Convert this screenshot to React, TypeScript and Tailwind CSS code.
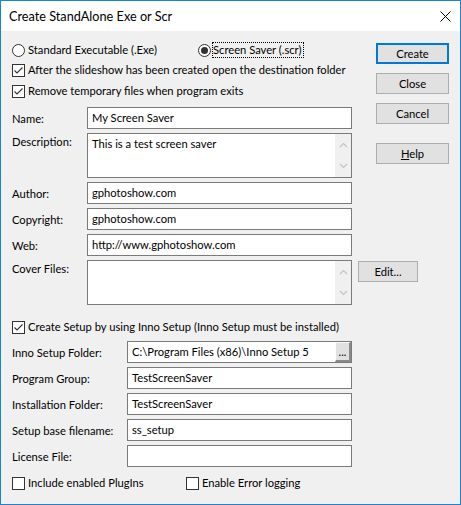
function Radio({ checked }: { checked?: boolean }) {
  return (
    <span className="w-[13px] h-[13px] rounded-full border border-[#333] bg-white flex items-center justify-center shrink-0">
      {checked && <span className="w-[7px] h-[7px] rounded-full bg-[#333]" />}
    </span>
  )
}

function Check({ checked, label, className }: { checked?: boolean; label: string; className?: string }) {
  return (
    <div className={"flex items-center h-[16px] " + (className ?? "")}>
      <span className="w-[13px] h-[13px] border border-[#333] bg-white shrink-0 relative">
        {checked && (
          <svg width="11" height="11" viewBox="0 0 11 11" className="absolute left-0 top-0">
            <path d="M1.5 5.5 L4 8 L9.5 2.5" fill="none" stroke="#333" strokeWidth="1.1" />
          </svg>
        )}
      </span>
      <span className="ml-[3px] whitespace-nowrap">{label}</span>
    </div>
  )
}

function Button({ children, primary, className }: { children: React.ReactNode; primary?: boolean; className?: string }) {
  return (
    <div
      className={
        "h-[21px] bg-[#e1e1e1] flex items-center justify-center " +
        (primary ? "border-2 border-[#0078d7] " : "border border-[#adadad] ") +
        (className ?? "")
      }
    >
      {children}
    </div>
  )
}

function Field({ value, className }: { value?: string; className?: string }) {
  return (
    <div className={"h-[22px] bg-white border border-[#7a7a7a] pl-[4px] flex items-center whitespace-nowrap " + (className ?? "")}>
      {value}
    </div>
  )
}

function Memo({ value }: { value?: string }) {
  return (
    <div className="w-[265px] h-[45px] bg-white border border-[#7a7a7a] flex">
      <div className="flex-1 pl-[4px] pt-[2px]">{value}</div>
      <div className="w-[16px] bg-[#f0f0f0] flex flex-col items-center justify-between py-[8px]">
        <svg width="9" height="6" viewBox="0 0 9 6">
          <path d="M1 5 L4.5 1.5 L8 5" fill="none" stroke="#c2c2c2" strokeWidth="1.2" />
        </svg>
        <svg width="9" height="6" viewBox="0 0 9 6">
          <path d="M1 1 L4.5 4.5 L8 1" fill="none" stroke="#c2c2c2" strokeWidth="1.2" />
        </svg>
      </div>
    </div>
  )
}

function Row({ label, children, labelW, top }: { label: string; children: React.ReactNode; labelW: string; top?: boolean }) {
  return (
    <div className="flex">
      <div className={"whitespace-nowrap shrink-0 " + labelW + (top ? " pt-[1px]" : " pt-[4px]")}>{label}</div>
      {children}
    </div>
  )
}

export default function App() {
  return (
    <div className="w-[461px] h-[505px] border border-[#1883d7] bg-[#f0f0f0] flex flex-col text-[11.2px] leading-[16px] text-black font-['Lato',sans-serif]">
      <div className="h-[30px] bg-white flex items-center justify-between pl-[8px] pr-[9px] shrink-0">
        <span className="text-[12.7px]">Create StandAlone Exe or Scr</span>
        <svg width="11" height="11" viewBox="0 0 11 11">
          <path d="M0.5 0.5 L10.5 10.5 M10.5 0.5 L0.5 10.5" stroke="#000" strokeWidth="1" />
        </svg>
      </div>

      <div className="pl-[11px] pt-[11px] flex flex-col">
        <div className="flex">
          <div className="w-[340px] flex flex-col">
            <div className="flex items-center h-[16px]">
              <div className="w-[186px] flex items-center">
                <Radio />
                <span className="ml-[3px] whitespace-nowrap">Standard Executable (.Exe)</span>
              </div>
              <Radio checked />
              <span className="ml-[1px] pr-[2px] border border-dotted border-black h-[16px] flex items-center whitespace-nowrap shrink-0">
                Screen Saver (.scr)
              </span>
            </div>
            <Check checked label="After the slideshow has been created open the destination folder" className="mt-[4px]" />
            <Check checked label="Remove temporary files when program exits" className="mt-[5px]" />
            <div className="mt-[8px] flex flex-col gap-[4px]">
              <Row label="Name:" labelW="w-[75px]">
                <Field value="My Screen Saver" className="w-[265px]" />
              </Row>
              <Row label="Description:" labelW="w-[75px]" top>
                <Memo value="This is a test screen saver" />
              </Row>
            </div>
          </div>
          <div className="ml-[24px] pt-[1px] w-[73px] flex flex-col">
            <Button primary>Create</Button>
            <Button className="mt-[9px]">Close</Button>
            <Button className="mt-[9px]">Cancel</Button>
            <Button className="mt-[19px]">
              <span>
                <span className="underline">H</span>elp
              </span>
            </Button>
          </div>
        </div>

        <div className="mt-[4px] flex flex-col gap-[4px]">
          <Row label="Author:" labelW="w-[75px]">
            <Field value="gphotoshow.com" className="w-[265px]" />
          </Row>
          <Row label="Copyright:" labelW="w-[75px]">
            <Field value="gphotoshow.com" className="w-[265px]" />
          </Row>
          <Row label="Web:" labelW="w-[75px]">
            <Field value="http://www.gphotoshow.com" className="w-[265px]" />
          </Row>
          <Row label="Cover Files:" labelW="w-[75px]" top>
            <Memo />
            <Button className="ml-[6px] mt-[1px] w-[60px] h-[20px]">Edit...</Button>
          </Row>
        </div>

        <Check checked label="Create Setup by using Inno Setup (Inno Setup must be installed)" className="mt-[14px]" />

        <div className="mt-[6px] flex flex-col gap-[4px]">
          <Row label="Inno Setup Folder:" labelW="w-[115px]">
            <div className="w-[225px] h-[22px] bg-white border border-[#7a7a7a] pl-[4px] flex items-center justify-between">
              <span className="whitespace-nowrap">C:\Program Files (x86)\Inno Setup 5</span>
              <span className="w-[16px] h-[20px] bg-[#e1e1e1] border-t border-l border-t-[#fcfcfc] border-l-[#fcfcfc] border-r-2 border-b-2 border-r-[#8a8a8a] border-b-[#8a8a8a] flex items-center justify-center text-[11px] leading-[10px]">
                ...
              </span>
            </div>
          </Row>
          <Row label="Program Group:" labelW="w-[115px]">
            <Field value="TestScreenSaver" className="w-[225px]" />
          </Row>
          <Row label="Installation Folder:" labelW="w-[115px]">
            <Field value="TestScreenSaver" className="w-[225px]" />
          </Row>
          <Row label="Setup base filename:" labelW="w-[115px]">
            <Field value="ss_setup" className="w-[225px]" />
          </Row>
          <Row label="License File:" labelW="w-[115px]">
            <Field className="w-[225px]" />
          </Row>
        </div>

        <div className="mt-[8px] flex">
          <Check label="Include enabled PlugIns" className="w-[174px]" />
          <Check label="Enable Error logging" />
        </div>
      </div>
    </div>
  )
}
